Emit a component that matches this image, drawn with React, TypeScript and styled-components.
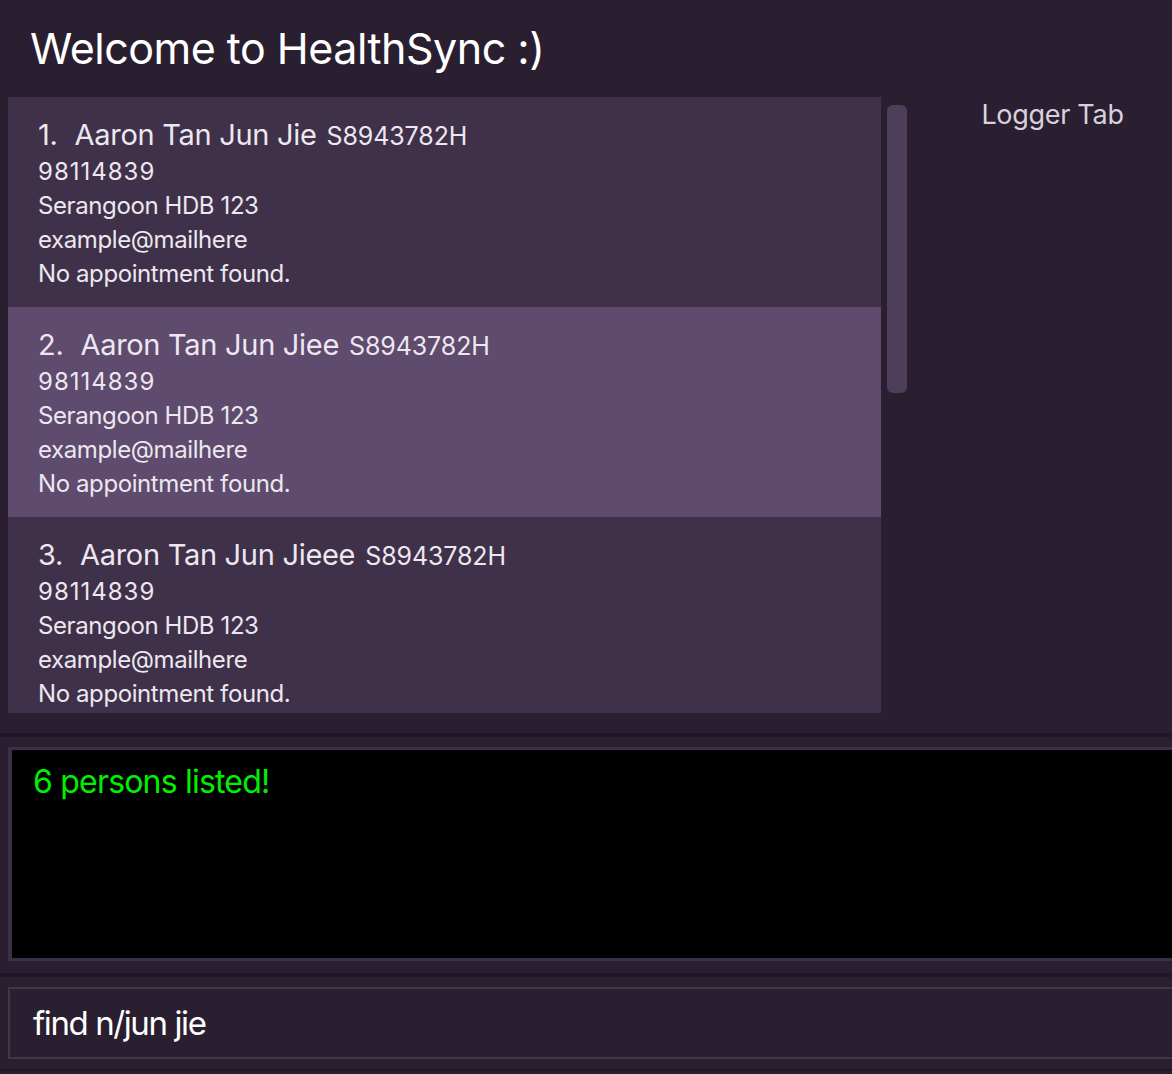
import React from "react";
import styled, { createGlobalStyle } from "styled-components";

const GlobalStyle = createGlobalStyle`
  html, body {
    margin: 0;
    padding: 0;
    background: #2a1f30;
    overflow: hidden;
  }
  body {
    font-family: Inter, "Noto Sans", "Liberation Sans", sans-serif;
  }
`;

const Page = styled.div`
  width: 1172px;
  height: 1074px;
  background: #2a1f30;
  display: flex;
  flex-direction: column;
  overflow: hidden;

  & > * {
    flex-shrink: 0;
  }
`;

const Header = styled.h1`
  margin: 0;
  height: 97px;
  box-sizing: border-box;
  padding: 22px 0 0 30px;
  font-size: 43px;
  font-weight: 400;
  color: #ffffff;
  letter-spacing: -0.5px;
`;

const Main = styled.div`
  display: flex;
  height: 616px;
  padding-left: 8px;
`;

const ListPanel = styled.div`
  width: 873px;
  height: 616px;
  overflow: hidden;
  display: flex;
  flex-direction: column;
`;

const Card = styled.div<{ $selected?: boolean }>`
  flex: 0 0 210px;
  box-sizing: border-box;
  padding: 20px 0 0 30px;
  background: ${(p) => (p.$selected ? "#5e4b6d" : "#3f3149")};
  color: #ede7f0;
`;

const NameRow = styled.div`
  display: flex;
  align-items: baseline;
  height: 38px;
`;

const Index = styled.span`
  font-size: 29px;
  margin-right: 17px;
  letter-spacing: -0.3px;
`;

const Name = styled.span`
  font-size: 29px;
  letter-spacing: -0.3px;
`;

const Nric = styled.span`
  font-size: 25px;
  margin-left: 10px;
  letter-spacing: -0.1px;
`;

const Line = styled.div<{ $digits?: boolean }>`
  font-size: 24px;
  line-height: 34px;
  letter-spacing: ${(p) => (p.$digits ? "1px" : "-0.4px")};
`;

const ScrollTrack = styled.div`
  width: 20px;
  margin-left: 6px;
  padding-top: 8px;
`;

const ScrollThumb = styled.div`
  height: 288px;
  border-radius: 6px;
  background: #4d3f59;
`;

const LoggerPane = styled.div`
  flex: 1;
  display: flex;
  justify-content: center;
  padding: 0 0 0 26px;
`;

const LoggerTitle = styled.div`
  font-size: 27px;
  line-height: 36px;
  color: #d9d2dd;
  letter-spacing: -0.3px;
`;

const Spacer = styled.div`
  height: 20px;
`;

const Divider = styled.div<{ $thin?: boolean }>`
  height: ${(p) => (p.$thin ? "2px" : "4px")};
  background: #1f1724;
`;

const ResultSection = styled.div`
  padding: 10px 0 12px 8px;
`;

const ResultBox = styled.div`
  height: 214px;
  box-sizing: border-box;
  border: 3px solid #3c3046;
  border-right: none;
  border-left-width: 4px;
  background: #000000;
  padding: 12px 0 0 21px;
  color: #00f000;
  font-size: 32px;
  letter-spacing: -0.8px;
`;

const CommandSection = styled.div`
  padding: 10px 0 10px 8px;
`;

const CommandBox = styled.div`
  height: 72px;
  box-sizing: border-box;
  border: 2px solid #3b3a3e;
  border-right: none;
  padding: 0 0 0 23px;
  display: flex;
  align-items: center;
  color: #ffffff;
  font-size: 33px;
  letter-spacing: -1.4px;
`;

const persons = [
  { name: "Aaron Tan Jun Jie" },
  { name: "Aaron Tan Jun Jiee" },
  { name: "Aaron Tan Jun Jieee" },
];

export default function App() {
  return (
    <Page>
      <GlobalStyle />
      <Header>Welcome to HealthSync :)</Header>
      <Main>
        <ListPanel>
          {persons.map((p, i) => (
            <Card key={p.name} $selected={i === 1}>
              <NameRow>
                <Index>{i + 1}.</Index>
                <Name>{p.name}</Name>
                <Nric>S8943782H</Nric>
              </NameRow>
              <Line $digits>98114839</Line>
              <Line>Serangoon HDB 123</Line>
              <Line>example@mailhere</Line>
              <Line>No appointment found.</Line>
            </Card>
          ))}
        </ListPanel>
        <ScrollTrack>
          <ScrollThumb />
        </ScrollTrack>
        <LoggerPane>
          <LoggerTitle>Logger Tab</LoggerTitle>
        </LoggerPane>
      </Main>
      <Spacer />
      <Divider />
      <ResultSection>
        <ResultBox>6 persons listed!</ResultBox>
      </ResultSection>
      <Divider />
      <CommandSection>
        <CommandBox>find n/jun jie</CommandBox>
      </CommandSection>
      <Divider $thin />
    </Page>
  );
}
